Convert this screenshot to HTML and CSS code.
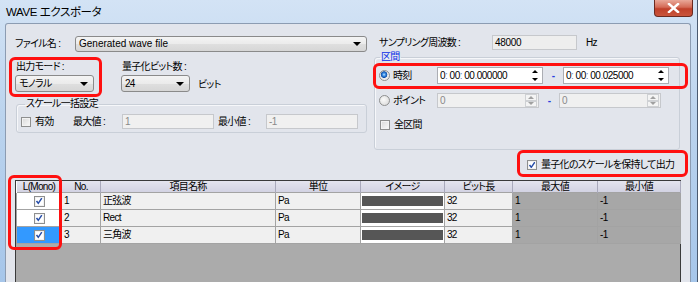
FILE: index.html
```html
<!DOCTYPE html>
<html lang="ja">
<head>
  <meta charset="UTF-8">
  <title>WAVE エクスポータ</title>
  <link rel="stylesheet" href="styles.css">
</head>
<body>
  <div class="window">
    <div class="titlebar">
      <span class="title">WAVE エクスポータ</span>
      <div class="close-btn">
        <svg width="13" height="10" viewBox="0 0 13 10"><path d="M2 1 L11 9 M11 1 L2 9" stroke="#fff" stroke-width="2.4" stroke-linecap="square"/></svg>
      </div>
    </div>

    <div class="client">
      <div class="top">
        <!-- 左側 -->
        <div class="col-left">
          <div class="file-row">
            <span class="cap-file">ファイル名 :</span>
            <div class="combo wide">Generated wave file<span class="arrow"></span></div>
          </div>

          <div class="mode-row">
            <div class="field mode-field">
              <div class="cap">出力モード :</div>
              <div class="combo mode">モノラル<span class="arrow"></span></div>
            </div>
            <div class="field">
              <div class="cap">量子化ビット数 :</div>
              <div class="combo-line">
                <div class="combo bits">24<span class="arrow"></span></div>
                <span class="unit">ビット</span>
              </div>
            </div>
          </div>

          <fieldset class="group scale">
            <legend>スケール一括設定</legend>
            <div class="scale-row">
              <span class="chk"></span>
              <span class="lbl-valid">有効</span>
              <span class="lbl-max">最大値 :</span>
              <div class="txt disabled w92">1</div>
              <span class="lbl-min">最小値 :</span>
              <div class="txt disabled w92">-1</div>
            </div>
          </fieldset>
        </div>

        <!-- 右側 -->
        <div class="col-right">
          <div class="sampling-row">
            <span class="cap-rate">サンプリング周波数 :</span>
            <div class="txt readonly rate">48000</div>
            <span class="hz">Hz</span>
          </div>

          <fieldset class="group range">
            <legend>区間</legend>
            <div class="range-row">
              <span class="radio on"></span>
              <span class="opt">時刻</span>
              <div class="txt time">
                <span class="tm">0<i>:</i> 00<i>:</i> 00<i>.</i>000000</span>
                <span class="spin"><b class="up"></b><b class="down"></b></span>
              </div>
              <span class="dash">-</span>
              <div class="txt time">
                <span class="tm">0<i>:</i> 00<i>:</i> 00<i>.</i>025000</span>
                <span class="spin"><b class="up"></b><b class="down"></b></span>
              </div>
            </div>
            <div class="range-row point">
              <span class="radio"></span>
              <span class="opt">ポイント</span>
              <div class="txt time disabled">
                <span class="tm">0</span>
                <span class="spin off"><b class="up"></b><b class="down"></b></span>
              </div>
              <span class="dash">-</span>
              <div class="txt time disabled">
                <span class="tm">0</span>
                <span class="spin off"><b class="up"></b><b class="down"></b></span>
              </div>
            </div>
            <div class="all-row">
              <span class="chk"></span>
              <span>全区間</span>
            </div>
          </fieldset>
        </div>
      </div>

      <div class="keep-row">
        <span class="chk checked"></span>
        <span>量子化のスケールを保持して出力</span>
      </div>

      <div class="grid">
        <table>
          <colgroup>
            <col style="width:45px"><col style="width:39px"><col style="width:175px"><col style="width:85px">
            <col style="width:84px"><col style="width:68px"><col style="width:85px"><col style="width:83px">
          </colgroup>
          <thead>
            <tr>
              <th>L(Mono)</th><th>No.</th><th>項目名称</th><th>単位</th>
              <th>イメージ</th><th>ビット長</th><th>最大値</th><th>最小値</th>
            </tr>
          </thead>
          <tbody>
            <tr>
              <td class="c-chk"><span class="chk checked"></span></td>
              <td>1</td><td>正弦波</td><td>Pa</td>
              <td class="c-img"><span class="bar"></span></td>
              <td>32</td><td class="c-dim">1</td><td class="c-dim">-1</td>
            </tr>
            <tr>
              <td class="c-chk"><span class="chk checked"></span></td>
              <td>2</td><td>Rect</td><td>Pa</td>
              <td class="c-img"><span class="bar"></span></td>
              <td>32</td><td class="c-dim">1</td><td class="c-dim">-1</td>
            </tr>
            <tr>
              <td class="c-chk selected"><span class="chk checked"></span></td>
              <td>3</td><td>三角波</td><td>Pa</td>
              <td class="c-img"><span class="bar"></span></td>
              <td>32</td><td class="c-dim">1</td><td class="c-dim">-1</td>
            </tr>
          </tbody>
        </table>
      </div>
    </div>

    <!-- 赤枠の注釈 -->
    <div class="mark m-mode"></div>
    <div class="mark m-time"></div>
    <div class="mark m-keep"></div>
    <div class="mark m-mono"></div>
  </div>
</body>
</html>
```

FILE: styles.css
```css
body {
  margin: 0;
  font-family: "Liberation Sans", "Noto Sans CJK JP", sans-serif;
  font-size: 10px;
  line-height: 12px;
  letter-spacing: -0.7px;
  font-feature-settings: "palt";
  color: #000;
  background: #fff;
}
.window {
  position: relative;
  width: 697px;
  height: 282px;
  overflow: hidden;
  border-right: 1px solid #4a5a70;
  background: linear-gradient(#d3e3f5, #bcd4ee 40%, #a6c6ea);
}

/* タイトルバー */
.titlebar {
  height: 23px;
  display: flex;
  justify-content: space-between;
  align-items: flex-start;
}
.title {
  padding: 6px 0 0 6px;
  font-size: 11.5px;
  line-height: 13px;
  letter-spacing: -0.4px;
}
.close-btn {
  width: 37px;
  height: 16px;
  margin-right: 4px;
  border: 1px solid #6b2a20;
  border-top: none;
  border-radius: 0 0 4px 4px;
  background: linear-gradient(#e9a899, #d46a56 45%, #c0402a 55%, #c9553c);
  display: flex;
  align-items: center;
  justify-content: center;
}

/* クライアント領域 */
.client {
  margin: 0 6px 0 5px;
  height: 259px;
  box-sizing: border-box;
  border: 1px solid #8c9cb2;
  border-bottom: none;
  border-radius: 3px 3px 0 0;
  background: #e2e5ec;
  padding: 11px 0 0 9px;
}
.top {
  display: flex;
}
.col-left {
  width: 352px;
}
.col-right {
  width: 307px;
  margin-left: 7px;
}

/* コンボボックス */
.combo {
  position: relative;
  box-sizing: border-box;
  border: 1px solid #8a8a8a;
  border-radius: 3px;
  background: linear-gradient(#f4f4f4, #ebebeb 50%, #dfdfdf 51%, #d6d6d6);
  padding-left: 3px;
  display: flex;
  align-items: center;
}
.arrow {
  position: absolute;
  right: 5px;
  top: 50%;
  margin-top: -2px;
  border-left: 4px solid transparent;
  border-right: 4px solid transparent;
  border-top: 4px solid #000;
}
.file-row {
  display: flex;
  align-items: center;
  margin-top: 1px;
  height: 16px;
}
.cap-file {
  width: 60px;
}
.combo.wide {
  width: 292px;
  height: 16px;
  letter-spacing: 0;
}
.mode-row {
  display: flex;
  margin-top: 9px;
}
.mode-field {
  width: 106px;
}
.cap {
  height: 13px;
  padding-left: 1px;
}
.combo.mode {
  width: 79px;
  height: 17px;
  margin-top: 1px;
}
.combo-line {
  display: flex;
  align-items: center;
  margin-top: 1px;
}
.combo.bits {
  width: 69px;
  height: 17px;
}
.unit {
  margin-left: 8px;
  padding-top: 3px;
}

/* グループボックス */
.group {
  margin: 0;
  padding: 0;
  border: 1px solid #c9cfd8;
  border-radius: 3px;
  box-shadow: inset 1px 1px 0 #f6f7fa;
}
.group legend {
  padding: 0 1px;
  margin-left: 4px;
  line-height: 12px;
}
.scale {
  margin: 6px 0 0 1px;
  width: 351px;
  box-sizing: border-box;
  padding: 4px 0 3px 4px;
}
.scale-row {
  display: flex;
  align-items: center;
  height: 15px;
}
.lbl-valid {
  margin-left: 4px;
  width: 38px;
}
.lbl-max {
  width: 49px;
}
.lbl-min {
  width: 48px;
  margin-left: 4px;
}

/* テキストボックス */
.txt {
  box-sizing: border-box;
  border: 1px solid #abadb3;
  background: #fff;
  height: 15px;
  padding-left: 2px;
  display: flex;
  align-items: center;
}
.txt.disabled {
  background: #f0f0f0;
  border-color: #c6c8cc;
  color: #8a8a8a;
}
.txt.readonly {
  background: #eeeeee;
  border-color: #c6c8cc;
}
.w92 {
  width: 92px;
}

/* チェックボックス・ラジオ */
.chk {
  display: inline-block;
  box-sizing: border-box;
  width: 10px;
  height: 10px;
  border: 1px solid #8e8f8f;
  background: linear-gradient(135deg, #d8d8d8, #fafafa);
  box-shadow: inset 0 0 0 1px #f2f2f2;
  flex: none;
}
.chk.checked {
  background-color: #fff;
  background-image: url("data:image/svg+xml,%3Csvg xmlns='http://www.w3.org/2000/svg' width='8' height='8'%3E%3Cpath d='M1.5 4 L3.3 6.3 L6.8 1.2' fill='none' stroke='%23264da8' stroke-width='1.5'/%3E%3C/svg%3E");
  background-repeat: no-repeat;
  background-position: center;
}
.radio {
  display: inline-block;
  box-sizing: border-box;
  width: 11px;
  height: 11px;
  border-radius: 50%;
  border: 1px solid #8e8f8f;
  background: radial-gradient(circle at 40% 40%, #fafafa, #d6d6d6);
  flex: none;
}
.radio.on {
  background: radial-gradient(circle at 45% 40%, #bfe3ff 0, #3a8ee6 1.5px, #0f4fa8 3px, #e8e8e8 3.6px, #f6f6f6);
}

/* サンプリング周波数 */
.sampling-row {
  display: flex;
  align-items: center;
  height: 15px;
}
.cap-rate {
  margin-left: 5px;
  width: 113px;
}
.rate {
  width: 85px;
  letter-spacing: -0.3px;
}
.hz {
  margin-left: 9px;
}

/* 区間 */
.range {
  margin-top: 1px;
  width: 306px;
  box-sizing: border-box;
  padding: 4px 0 19px 4px;
}
.range legend {
  color: #0b2ee8;
  margin-left: 1px;
}
.range-row {
  display: flex;
  align-items: center;
  height: 17px;
}
.range-row.point {
  height: 15px;
  margin-top: 9px;
}
.opt {
  margin-left: 3px;
  width: 44px;
}
.txt.time {
  width: 106px;
  height: 17px;
  justify-content: space-between;
  padding-right: 1px;
}
.point .txt.time {
  width: 102px;
  height: 15px;
}
.tm {
  letter-spacing: -0.5px;
}
.tm i {
  font-style: normal;
  color: #7486c4;
}
.dash {
  width: 20px;
  text-align: center;
  color: #2a3ee0;
  font-weight: bold;
}
.spin {
  display: flex;
  flex-direction: column;
  width: 12px;
  height: 15px;
}
.spin b {
  flex: 1;
  display: flex;
  align-items: center;
  justify-content: center;
}
.spin .up::after {
  content: "";
  border-left: 3px solid transparent;
  border-right: 3px solid transparent;
  border-bottom: 3px solid #000;
}
.spin .down::after {
  content: "";
  border-left: 3px solid transparent;
  border-right: 3px solid transparent;
  border-top: 3px solid #000;
}
.spin.off {
  height: 13px;
}
.spin.off b {
  border: 1px solid #cfd1d4;
  background: #f4f4f4;
}
.spin.off .up::after {
  border-bottom-color: #a0a0a0;
}
.spin.off .down::after {
  border-top-color: #a0a0a0;
}
.all-row {
  display: flex;
  align-items: center;
  gap: 4px;
  margin-top: 12px;
  padding-left: 1px;
  height: 10px;
}

/* 保持チェック */
.keep-row {
  display: flex;
  align-items: center;
  gap: 4px;
  margin: 9px 0 0 512px;
  height: 12px;
  white-space: nowrap;
}

/* グリッド */
.grid {
  margin-top: 9px;
  width: 666px;
  height: 120px;
  box-sizing: border-box;
  border: 1px solid #3a3a3a;
  background: #ababab;
}
.grid table {
  border-collapse: collapse;
  table-layout: fixed;
  width: 664px;
}
.grid th {
  height: 11px;
  padding: 0;
  font-weight: normal;
  text-align: center;
  background: linear-gradient(#e4e4ee, #d2d2e2);
  border-left: 1px solid #fff;
  border-right: 1px solid #a9a9bb;
  line-height: 11px;
}
.grid td {
  height: 16px;
  padding: 0 0 0 2px;
  border: 1px solid #a3a3a3;
  background: #f0f0f0;
  white-space: nowrap;
}
.grid td.c-chk {
  background: #fff;
  text-align: center;
  padding: 0;
}
.grid td.c-chk .chk {
  vertical-align: middle;
  width: 11px;
  height: 11px;
}
.grid td.selected {
  background: #3399ff;
}
.grid td.c-img {
  background: #fff;
  padding: 0;
}
.bar {
  display: block;
  height: 10px;
  margin: 0 1px;
  background: #565656;
}
.grid td.c-dim {
  background: #a7a7a7;
}

/* 注釈の赤枠 */
.mark {
  position: absolute;
  border: 3px solid #ff1010;
  border-radius: 6px;
  box-sizing: border-box;
}
.m-mode {
  left: 9px;
  top: 57px;
  width: 93px;
  height: 40px;
}
.m-time {
  left: 373px;
  top: 63px;
  width: 315px;
  height: 26px;
}
.m-keep {
  left: 517px;
  top: 150px;
  width: 171px;
  height: 27px;
}
.m-mono {
  left: 8px;
  top: 175px;
  width: 54px;
  height: 75px;
}
```
